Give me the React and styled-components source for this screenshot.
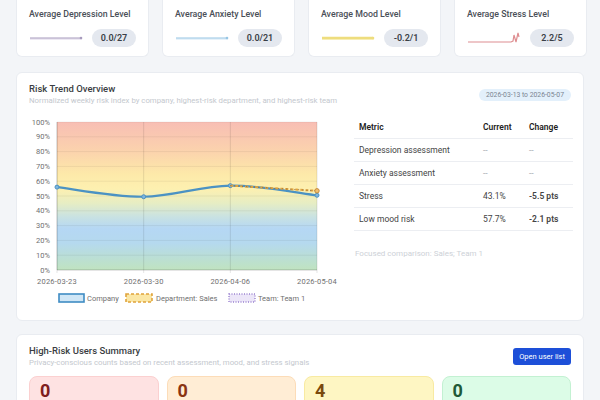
import React from "react";
import styled, { createGlobalStyle } from "styled-components";

const GlobalStyle = createGlobalStyle`
    body {
        margin: 0;
        background: #f3f5f8;
        font-family: Roboto, "Liberation Sans", sans-serif;
        color: #333;
    }
`;

const Page = styled.div`
    display: flex;
    flex-direction: column;
    padding: 0 16px 16px;
`;

const StatGrid = styled.div`
    display: grid;
    grid-template-columns: repeat(4, 1fr);
    gap: 13px;
`;

const StatCard = styled.div`
    background: #fff;
    border: 1px solid #e9ecf1;
    border-top: none;
    border-radius: 0 0 6px 6px;
    padding: 8px 12px 9px;
`;

const StatTitle = styled.div`
    font-size: 8.8px;
    line-height: 12px;
    font-weight: 500;
    color: #4a4f57;
    white-space: nowrap;
`;

const StatRow = styled.div`
    display: flex;
    align-items: center;
    gap: 9px;
    margin-top: 9px;
`;

const Badge = styled.span`
    display: inline-flex;
    align-items: center;
    justify-content: center;
    min-width: 44px;
    height: 18px;
    padding: 0 6px;
    box-sizing: border-box;
    border-radius: 9px;
    background: #e4e8ef;
    font-size: 9px;
    font-weight: 600;
    color: #3a3f47;
`;

const Card = styled.section`
    background: #fff;
    border: 1px solid #e9ecf1;
    border-radius: 6px;
    padding: 10px 12px 12px;
    margin-top: ${p => p.$gap}px;
`;

const CardHeader = styled.div`
    display: flex;
    justify-content: space-between;
    align-items: center;
`;

const CardTitle = styled.h2`
    margin: 0;
    font-size: 9.5px;
    line-height: 12px;
    font-weight: 500;
    color: #3a3d42;
`;

const CardSub = styled.p`
    margin: 0;
    font-size: 7.8px;
    line-height: 11px;
    color: #c4c8ce;
`;

const DatePill = styled.span`
    font-size: 6.8px;
    line-height: 12px;
    padding: 0 7px;
    border-radius: 6px;
    background: #e3f0fb;
    color: #7b8591;
`;

const TrendBody = styled.div`
    display: grid;
    grid-template-columns: 1fr 219px;
    gap: 13px;
    margin-top: 7px;
`;

const Table = styled.table`
    width: 100%;
    border-collapse: collapse;
    margin-top: 3px;
    font-size: 8.5px;
`;

const Th = styled.th`
    text-align: left;
    font-weight: 600;
    color: #222;
    height: 22px;
    padding: 0 5px;
    border-bottom: 1px solid #eceef2;
    width: ${p => p.$w || "auto"};
`;

const Td = styled.td`
    height: 22px;
    padding: 0 5px;
    color: ${p => (p.$muted ? "#a9adb4" : "#444")};
    font-weight: ${p => (p.$bold ? 600 : 400)};
    border-bottom: 1px solid #eceef2;
    white-space: nowrap;
`;

const Note = styled.p`
    margin: 18px 0 0 1px;
    font-size: 8px;
    color: #cdd1d7;
`;

const Button = styled.button`
    border: none;
    border-radius: 3px;
    background: #1d4fd8;
    color: #fff;
    font-family: inherit;
    font-size: 7.5px;
    height: 17px;
    padding: 0 6px;
    width: 58px;
`;

const CountGrid = styled.div`
    display: grid;
    grid-template-columns: repeat(4, 1fr);
    gap: 8px;
    margin-top: 8px;
`;

const CountCard = styled.div`
    border-radius: 8px;
    background: ${p => p.$bg};
    border: 1px solid ${p => p.$border};
    padding: 4px 10px 20px;
    font-size: 18px;
    line-height: 20px;
    font-weight: 700;
    color: ${p => p.$fg};
`;

function Sparkline({ kind }) {
    if (kind === "stress") {
        return (
            <svg width="54" height="14" viewBox="0 0 54 14">
                <path d="M1 11 L44 11 L46 10 L47 4 L49 11 L51 2 L52 6" fill="none" stroke="#de8e91" strokeWidth="1.2" />
            </svg>
        );
    }
    const colors = {
        depression: ["#a79bbd", "#ede9f3", 1.2],
        anxiety: ["#98c6e4", "#e7f2fa", 1.2],
        mood: ["#eedd7e", "#faf3c8", 2.6]
    };
    const [c, f, w] = colors[kind];
    return (
        <svg width="54" height="14" viewBox="0 0 54 14">
            <rect x="1" y="7" width="52" height="2" fill={f} />
            <line x1="1" y1="7" x2="52" y2="7" stroke={c} strokeWidth={w} />
            <circle cx="52" cy="7" r="1.3" fill={c} />
        </svg>
    );
}

const stats = [
    { title: "Average Depression Level", kind: "depression", value: "0.0/27" },
    { title: "Average Anxiety Level", kind: "anxiety", value: "0.0/21" },
    { title: "Average Mood Level", kind: "mood", value: "-0.2/1" },
    { title: "Average Stress Level", kind: "stress", value: "2.2/5" }
];

// chart geometry
const L = 28;
const R = 288;
const TOP = 9;
const BOT = 157;
const xs = [L, L + (R - L) / 3, L + (2 * (R - L)) / 3, R];
const yOf = p => BOT - (p / 100) * (BOT - TOP);

function smoothPath(pts, t = 0.35) {
    let d = `M${pts[0][0]} ${pts[0][1]}`;
    for (let i = 0; i < pts.length - 1; i++) {
        const p0 = pts[i - 1] || pts[i];
        const p1 = pts[i];
        const p2 = pts[i + 1];
        const p3 = pts[i + 2] || p2;
        const c1 = [p1[0] + (p2[0] - p0[0]) * t / 2, p1[1] + (p2[1] - p0[1]) * t / 2];
        const c2 = [p2[0] - (p3[0] - p1[0]) * t / 2, p2[1] - (p3[1] - p1[1]) * t / 2];
        d += ` C${c1[0]} ${c1[1]} ${c2[0]} ${c2[1]} ${p2[0]} ${p2[1]}`;
    }
    return d;
}

const company = [56, 49.5, 57, 50.5].map((v, i) => [xs[i], yOf(v)]);
const dept = [[xs[2], yOf(57)], [xs[3], yOf(53.5)]];
const dates = ["2026-03-23", "2026-03-30", "2026-04-06", "2026-05-04"];

function TrendChart() {
    const ticks = [0, 10, 20, 30, 40, 50, 60, 70, 80, 90, 100];
    return (
        <svg width="312" height="195" viewBox="0 0 312 195" style={{ display: "block" }}>
            <defs>
                <linearGradient id="risk" x1="0" y1="0" x2="0" y2="1">
                    <stop offset="0" stopColor="#f8beb4" />
                    <stop offset="0.2" stopColor="#fbd3ad" />
                    <stop offset="0.35" stopColor="#fde9a9" />
                    <stop offset="0.45" stopColor="#fdf0b0" />
                    <stop offset="0.55" stopColor="#e6edc4" />
                    <stop offset="0.64" stopColor="#c9e2e2" />
                    <stop offset="0.72" stopColor="#b5d7f4" />
                    <stop offset="0.82" stopColor="#b5d9ee" />
                    <stop offset="0.92" stopColor="#bbdfd4" />
                    <stop offset="1" stopColor="#c0e3c0" />
                </linearGradient>
            </defs>
            <rect x={L} y={TOP} width={R - L} height={BOT - TOP} fill="url(#risk)" />
            {ticks.map(t => (
                <g key={t}>
                    <line x1={L} x2={R} y1={yOf(t)} y2={yOf(t)} stroke="rgba(0,0,0,0.06)" />
                    <text x="21" y={yOf(t) + 2.6} textAnchor="end" fontSize="7.5" fill="#707070">
                        {t}%
                    </text>
                </g>
            ))}
            {xs.map((x, i) => (
                <g key={i}>
                    <line x1={x} x2={x} y1={TOP} y2={BOT + 3} stroke="rgba(0,0,0,0.1)" />
                    <text x={x} y="171" textAnchor="middle" fontSize="7.5" fill="#707070" letterSpacing="0.2">
                        {dates[i]}
                    </text>
                </g>
            ))}
            <line x1={L} x2={L} y1={TOP} y2={BOT} stroke="rgba(0,0,0,0.15)" />
            <line x1={L} x2={R} y1={BOT} y2={BOT} stroke="rgba(0,0,0,0.15)" />

            <path d={smoothPath(company)} fill="none" stroke="#4b92c3" strokeWidth="2.2" />
            {company.map(([x, y], i) => (
                <circle key={i} cx={x} cy={y} r="2" fill="#7fb6de" stroke="#4b92c3" strokeWidth="1" />
            ))}
            <path d={smoothPath(dept)} fill="none" stroke="#e0a43c" strokeWidth="2" strokeDasharray="3 2" />
            <path d={smoothPath(dept)} fill="none" stroke="#8a6a4a" strokeWidth="1" strokeDasharray="1 3" />
            <circle cx={dept[1][0]} cy={dept[1][1]} r="2.2" fill="#f0c070" stroke="#c58a3a" strokeWidth="1" />

            <g fontSize="7.5" fill="#707070">
                <rect x="30" y="181" width="25" height="8" fill="#cfe6f6" stroke="#3f8cc4" strokeWidth="1.6" />
                <text x="58" y="188">Company</text>
                <rect x="97" y="181" width="26" height="8" fill="#fbe7a6" stroke="#e0a43c" strokeWidth="1.6" strokeDasharray="3 2" />
                <text x="127" y="188">Department: Sales</text>
                <rect x="200" y="181" width="26" height="8" fill="#ece6f8" stroke="#9a82d0" strokeWidth="1.4" strokeDasharray="1 1.5" />
                <text x="229" y="188">Team: Team 1</text>
            </g>
        </svg>
    );
}

const metrics = [
    { name: "Depression assessment", current: "--", change: "--", muted: true },
    { name: "Anxiety assessment", current: "--", change: "--", muted: true },
    { name: "Stress", current: "43.1%", change: "-5.5 pts" },
    { name: "Low mood risk", current: "57.7%", change: "-2.1 pts" }
];

const counts = [
    { value: 0, bg: "#fee2e2", border: "#fbd0d0", fg: "#7f1d1d" },
    { value: 0, bg: "#ffedd5", border: "#fcdcb8", fg: "#8a3412" },
    { value: 4, bg: "#fef6c3", border: "#f8eaa2", fg: "#7a4a0e" },
    { value: 0, bg: "#dcfce7", border: "#c3f1d2", fg: "#1f5a37" }
];

export default function App() {
    return (
        <>
            <GlobalStyle />
            <Page>
                <StatGrid>
                    {stats.map(s => (
                        <StatCard key={s.title}>
                            <StatTitle>{s.title}</StatTitle>
                            <StatRow>
                                <Sparkline kind={s.kind} />
                                <Badge>{s.value}</Badge>
                            </StatRow>
                        </StatCard>
                    ))}
                </StatGrid>

                <Card $gap={15}>
                    <CardHeader>
                        <div>
                            <CardTitle>Risk Trend Overview</CardTitle>
                            <CardSub>Normalized weekly risk index by company, highest-risk department, and highest-risk team</CardSub>
                        </div>
                        <DatePill>2026-03-13 to 2026-05-07</DatePill>
                    </CardHeader>
                    <TrendBody>
                        <TrendChart />
                        <div>
                            <Table>
                                <thead>
                                    <tr>
                                        <Th $w="114px">Metric</Th>
                                        <Th $w="36px">Current</Th>
                                        <Th>Change</Th>
                                    </tr>
                                </thead>
                                <tbody>
                                    {metrics.map(m => (
                                        <tr key={m.name}>
                                            <Td>{m.name}</Td>
                                            <Td $muted={m.muted}>{m.current}</Td>
                                            <Td $muted={m.muted} $bold={!m.muted}>{m.change}</Td>
                                        </tr>
                                    ))}
                                </tbody>
                            </Table>
                            <Note>Focused comparison: Sales; Team 1</Note>
                        </div>
                    </TrendBody>
                </Card>

                <Card $gap={13}>
                    <CardHeader>
                        <div>
                            <CardTitle>High-Risk Users Summary</CardTitle>
                            <CardSub>Privacy-conscious counts based on recent assessment, mood, and stress signals</CardSub>
                        </div>
                        <Button>Open user list</Button>
                    </CardHeader>
                    <CountGrid>
                        {counts.map((c, i) => (
                            <CountCard key={i} $bg={c.bg} $border={c.border} $fg={c.fg}>
                                {c.value}
                            </CountCard>
                        ))}
                    </CountGrid>
                </Card>
            </Page>
        </>
    );
}
